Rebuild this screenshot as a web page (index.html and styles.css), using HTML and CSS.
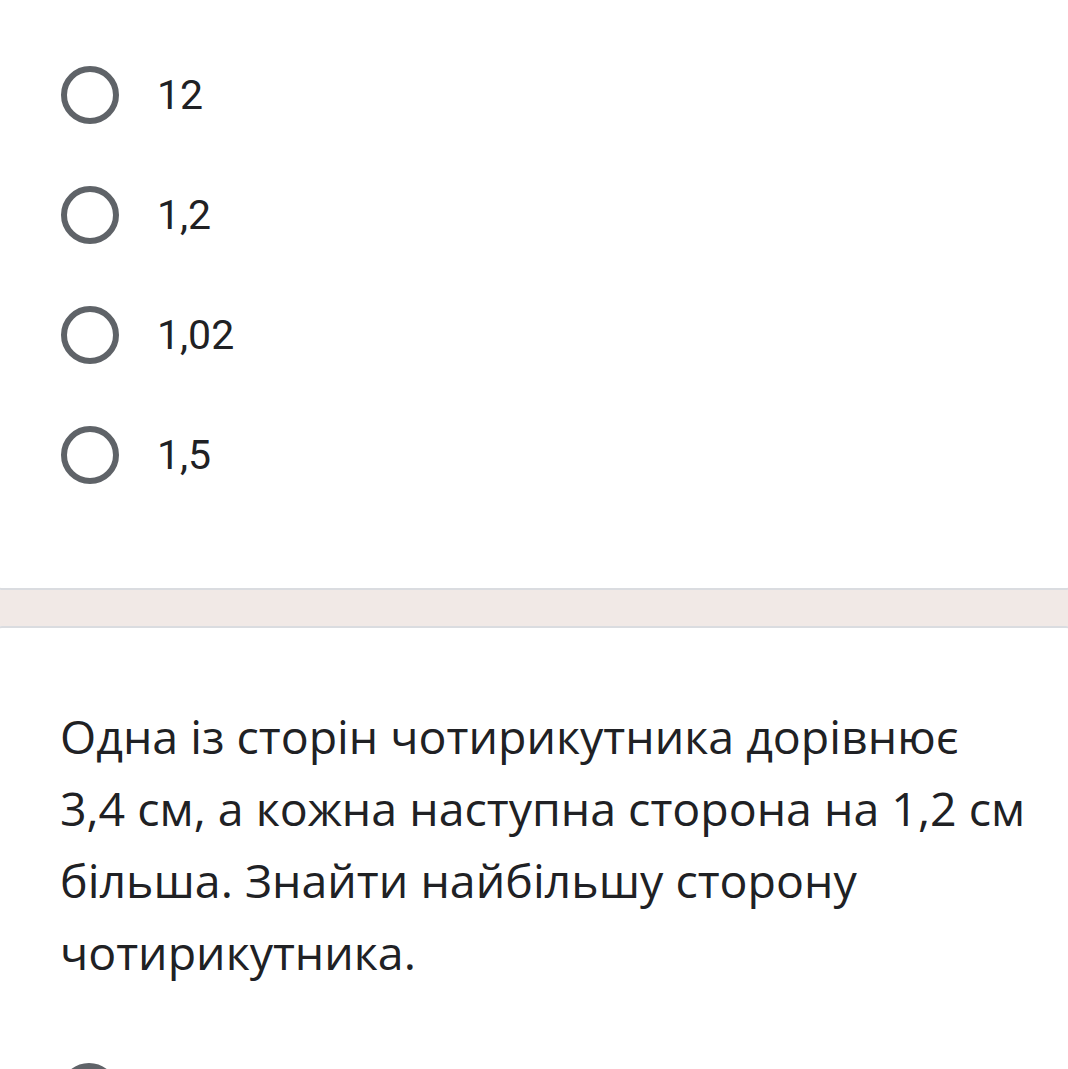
FILE: index.html
```html
<!DOCTYPE html>
<html lang="uk">
<head>
<meta charset="utf-8">
<link rel="stylesheet" href="styles.css">
</head>
<body>
<div class="card card-top">
  <div class="options">
    <div class="option"><span class="radio"></span><span class="label">12</span></div>
    <div class="option"><span class="radio"></span><span class="label">1,2</span></div>
    <div class="option"><span class="radio"></span><span class="label">1,02</span></div>
    <div class="option"><span class="radio"></span><span class="label">1,5</span></div>
  </div>
</div>
<div class="gap"></div>
<div class="card card-bottom">
  <p class="question">Одна із сторін чотирикутника дорівнює 3,4 см, а кожна наступна сторона на 1,2 см більша. Знайти найбільшу сторону чотирикутника.</p>
  <div class="options">
    <div class="option"><span class="radio"></span><span class="label"></span></div>
  </div>
</div>
</body>
</html>
```

FILE: styles.css
```css
html, body {
  margin: 0;
  padding: 0;
  background: #ffffff;
  overflow: hidden;
}
body {
  width: 1068px;
  height: 1069px;
  font-family: Roboto, "Noto Sans", sans-serif;
  color: #202124;
}
.card {
  background: #ffffff;
}
.card-top {
  padding: 35px 0 73px 67px;
  border-bottom: 2px solid #dadce0;
  border-radius: 0 0 8px 8px;
  margin: 0 -6px;
}
.gap {
  height: 36px;
  background: #f1e9e6;
}
.card-bottom {
  border-top: 2px solid #dadce0;
  border-radius: 8px 8px 0 0;
  margin: 0 -6px;
  padding: 72px 44px 0 66px;
}
.option {
  display: flex;
  align-items: center;
  height: 120px;
}
.radio {
  box-sizing: border-box;
  width: 58px;
  height: 58px;
  border: 6px solid #5f6368;
  border-radius: 50%;
  flex: none;
}
.label {
  margin-left: 38px;
  font-size: 41px;
  color: #202124;
}
.question {
  margin: 0 0 44px 0;
  font-family: "Open Sans", sans-serif;
  font-size: 46.5px;
  line-height: 72px;
  color: #202124;
}
```
